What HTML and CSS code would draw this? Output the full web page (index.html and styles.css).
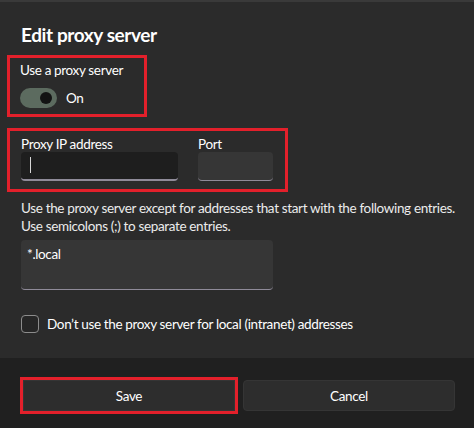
FILE: index.html
```html
<!DOCTYPE html>
<html lang="en">
<head>
    <meta charset="UTF-8">
    <meta name="viewport" content="width=device-width, initial-scale=1.0">
    <title>Edit proxy server</title>
    <link rel="stylesheet" href="styles.css">
</head>
<body>
    <div class="dialog">
        <section class="content">
            <h1 class="title">Edit proxy server</h1>

            <div class="mark mark-toggle">
                <div class="label">Use a proxy server</div>
                <div class="toggle-row">
                    <span class="toggle"><span class="thumb"></span></span>
                    <span>On</span>
                </div>
            </div>

            <div class="mark mark-address">
                <div class="field field-ip">
                    <div class="label">Proxy IP address</div>
                    <div class="input focused"><span class="caret"></span></div>
                </div>
                <div class="field field-port">
                    <div class="label">Port</div>
                    <div class="input"></div>
                </div>
            </div>

            <p class="hint">Use the proxy server except for addresses that start with the following entries.<br>Use semicolons (;) to separate entries.</p>

            <div class="textarea">*.local</div>

            <label class="check">
                <span class="box"></span>
                Don’t use the proxy server for local (intranet) addresses
            </label>
        </section>
        <footer class="footer">
            <button class="btn btn-save">Save</button>
            <button class="btn">Cancel</button>
        </footer>
    </div>
</body>
</html>
```

FILE: styles.css
```css
body {
    margin: 0;
    padding: 0;
    background-color: #2b2b2b;
    color: #ffffff;
    font-family: 'Lato', 'Noto Sans', sans-serif;
    font-size: 13.5px;
    line-height: 18px;
    letter-spacing: -0.35px;
}
.dialog {
    height: 428px;
    display: flex;
    flex-direction: column;
    border-top: 2px solid #3a3a3a;
    box-sizing: border-box;
}
.content {
    flex: 1;
    padding: 0 18px 0 21px;
}
.title {
    margin: 19px 0 0 0;
    font-size: 19px;
    line-height: 28px;
    font-weight: 700;
    letter-spacing: -0.4px;
}
/* red highlight boxes */
.mark {
    border: 3px solid #e3202b;
    margin-left: -14px;
}
.mark-toggle {
    margin-top: 6px;
    padding: 3px 0 6px 10px;
    box-sizing: border-box;
    width: 140px;
}
.toggle-row {
    display: flex;
    align-items: center;
    gap: 9px;
    margin-top: 9px;
}
.toggle {
    width: 37px;
    height: 20px;
    border-radius: 10px;
    background-color: #5c6b5f;
    position: relative;
}
.thumb {
    position: absolute;
    top: 4px;
    right: 5px;
    width: 12px;
    height: 12px;
    border-radius: 50%;
    background-color: #131313;
}
.mark-address {
    display: flex;
    gap: 20px;
    width: 281px;
    box-sizing: border-box;
    margin-top: 11px;
    padding: 5px 12px 8px 11px;
}
.field .label {
    line-height: 16px;
}
.input {
    height: 29px;
    box-sizing: border-box;
    background-color: #363636;
    border-radius: 4px;
    border-bottom: 1px solid #8f8b99;
    position: relative;
}
.input.focused {
    background-color: #1e1e1e;
    border-bottom: 2px solid #8f8b99;
}
.caret {
    position: absolute;
    left: 9px;
    top: 5px;
    width: 1px;
    height: 16px;
    background-color: #d8d8d8;
}
.field-ip {
    width: 157px;
}
.field-port {
    width: 75px;
}
.hint {
    margin: 7px 0 0 0;
    color: #ececec;
    white-space: nowrap;
}
.textarea {
    width: 252px;
    height: 50px;
    box-sizing: border-box;
    margin-top: 5px;
    padding: 5px 6px;
    background-color: #363636;
    border-radius: 4px;
    border-bottom: 1px solid #8f8b99;
}
.check {
    display: flex;
    align-items: center;
    gap: 8px;
    margin-top: 25px;
}
.box {
    width: 16px;
    height: 16px;
    border: 1px solid #8c8c8c;
    border-radius: 4px;
    background-color: #262626;
}
.footer {
    height: 70px;
    box-sizing: border-box;
    background-color: #202020;
    display: flex;
    gap: 8px;
    padding: 22px 19px 0 23px;
}
.btn {
    flex: 1;
    height: 31px;
    background-color: #2d2d2d;
    border: 1px solid #353535;
    border-radius: 4px;
    color: #ffffff;
    font-family: 'Lato', 'Noto Sans', sans-serif;
    font-size: 13.5px;
    letter-spacing: -0.35px;
}
.btn-save {
    outline: 3px solid #e3202b;
    border-radius: 0;
}
```
